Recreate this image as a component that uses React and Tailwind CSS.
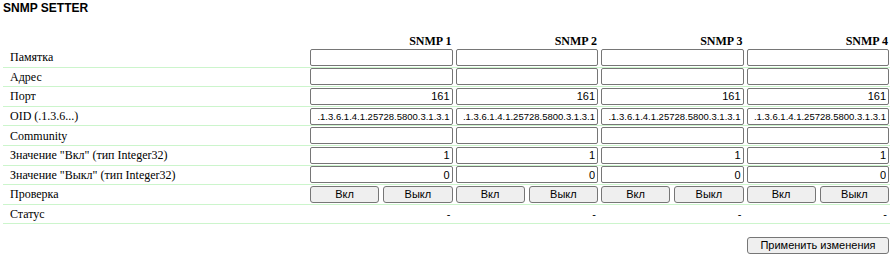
import React from 'react';

const serif = { fontFamily: '"Liberation Serif", "Times New Roman", serif' };

const cols = [1, 2, 3, 4];

function Field({ value = '', small }) {
    return (
        <input
            readOnly
            value={value}
            className={`w-full h-[17px] box-border border border-[#767676] rounded-[2px] bg-white text-right pr-[2px] text-black outline-none font-['Liberation_Sans',Arial,sans-serif] ${small ? 'text-[9.5px]' : 'text-[11px]'}`}
        />
    );
}

function Row({ label, children }) {
    return (
        <div className="grid grid-cols-[305px_repeat(4,1fr)] h-[19.6px] box-border border-b border-[#ccf5cc] items-center">
            <div className="pl-[7px] text-[12px] leading-[14px] text-black whitespace-nowrap" style={serif}>
                {label}
            </div>
            {children}
        </div>
    );
}

export default function App() {
    const rows = [
        { label: 'Памятка', value: '' },
        { label: 'Адрес', value: '' },
        { label: 'Порт', value: '161' },
        { label: 'OID (.1.3.6...)', value: '.1.3.6.1.4.1.25728.5800.3.1.3.1', small: true },
        { label: 'Community', value: '' },
        { label: 'Значение "Вкл" (тип Integer32)', value: '1' },
        { label: 'Значение "Выкл" (тип Integer32)', value: '0' },
    ];

    return (
        <div className="w-[895px] h-[258px] bg-white overflow-hidden">
            {/* Title */}
            <div className="pl-[3px] pt-[1px] text-[12px] leading-[14px] font-bold text-black font-['Liberation_Sans',Arial,sans-serif]">
                SNMP SETTER
            </div>

            <div className="ml-[3px] w-[887px] mt-[18px]">
                {/* Header */}
                <div className="grid grid-cols-[305px_repeat(4,1fr)] h-[15px] items-end">
                    <div />
                    {cols.map((n) => (
                        <div key={n} className="text-right pr-[2px] text-[12px] leading-[14px] font-bold text-black" style={serif}>
                            SNMP {n}
                        </div>
                    ))}
                </div>

                {rows.map((r) => (
                    <Row key={r.label} label={r.label}>
                        {cols.map((n) => (
                            <div key={n} className="pl-[2px] pr-[1px] flex items-center">
                                <Field value={r.value} small={r.small} />
                            </div>
                        ))}
                    </Row>
                ))}

                <Row label="Проверка">
                    {cols.map((n) => (
                        <div key={n} className="pl-[2px] pr-[1px] flex gap-[4px]">
                            <button className="flex-1 h-[17px] box-border border border-[#767676] rounded-[3px] bg-[#efefef] text-[11px] leading-none text-black font-['Liberation_Sans',Arial,sans-serif]">
                                Вкл
                            </button>
                            <button className="flex-1 h-[17px] box-border border border-[#767676] rounded-[3px] bg-[#efefef] text-[11px] leading-none text-black font-['Liberation_Sans',Arial,sans-serif]">
                                Выкл
                            </button>
                        </div>
                    ))}
                </Row>

                <Row label="Статус">
                    {cols.map((n) => (
                        <div key={n} className="text-right pr-[3px] text-[11px] leading-none text-black font-['Liberation_Sans',Arial,sans-serif]">
                            -
                        </div>
                    ))}
                </Row>
            </div>

            <div className="flex justify-end w-[889px] mt-[13px]">
                <button className="w-[142px] h-[17px] box-border border border-[#767676] rounded-[3px] bg-[#efefef] text-[11px] leading-none text-black font-['Liberation_Sans',Arial,sans-serif]">
                    Применить изменения
                </button>
            </div>
        </div>
    );
}
